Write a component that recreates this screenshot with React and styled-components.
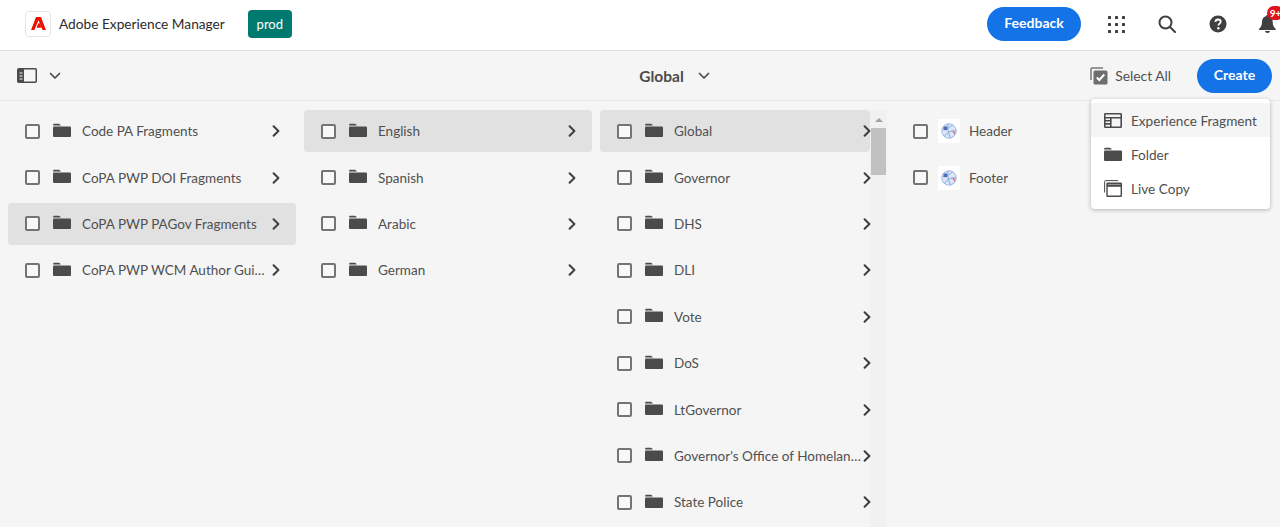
import React from 'react';
import styled, { createGlobalStyle } from 'styled-components';

const GlobalStyle = createGlobalStyle`
  html, body { margin: 0; padding: 0; height: 100%; overflow: hidden; }
  #root { height: 100%; }
  body { font-family: Lato, "Open Sans", sans-serif; background: #f5f5f5; color: #4b4b4b; }
`;

const FolderIcon = () => (
  <svg width="18" height="15" viewBox="0 0 18 15">
    <path d="M0 2.2C0 1.3.6.7 1.5.7h4.2c.5 0 .9.2 1.2.6l1 1.2h-8z" fill="#4b4b4b" />
    <rect x="0" y="3.4" width="18" height="10.6" rx="1" fill="#4b4b4b" />
  </svg>
);

const Chevron = () => (
  <svg width="8" height="12" viewBox="0 0 8 12">
    <path d="M1.6 1.2 6.4 6l-4.8 4.8" fill="none" stroke="#3f3f3f" strokeWidth="2" strokeLinecap="round" strokeLinejoin="round" />
  </svg>
);

const Globe = () => (
  <svg width="18" height="18" viewBox="0 0 20 20">
    <circle cx="10" cy="10" r="8" fill="#dbe6f6" stroke="#8fb0e0" />
    <path d="M3 8c4 1 9-3 11-5M5 16c2-4 8-7 13-6M9 2c-1 5 0 11 3 16" fill="none" stroke="#7fa3dc" />
    <rect x="4" y="5" width="4" height="4" fill="#4a6fb5" />
    <path d="m13 9 4 3-1 2z" fill="#d9606a" />
  </svg>
);

const Row = ({ label, selected, thumb, last }) => (
  <RowBox $selected={selected}>
    <Check />
    {thumb ? <Thumb><Globe /></Thumb> : <FolderSlot><FolderIcon /></FolderSlot>}
    <RowLabel $thumb={thumb}>{label}</RowLabel>
    {!thumb && <ChevronSlot $last={last}><Chevron /></ChevronSlot>}
  </RowBox>
);

const col1 = ['Code PA Fragments', 'CoPA PWP DOI Fragments', 'CoPA PWP PAGov Fragments', 'CoPA PWP WCM Author Guide Fragments'];
const col2 = ['English', 'Spanish', 'Arabic', 'German'];
const col3 = ['Global', 'Governor', 'DHS', 'DLI', 'Vote', 'DoS', 'LtGovernor', "Governor's Office of Homeland Security", 'State Police'];

export default function App() {
  return (
    <Page>
      <GlobalStyle />
      <Header>
        <Brand>
          <LogoBox>
            <svg width="15" height="13" viewBox="0 0 16 14">
              <path d="M5.3 0h5.400L16 14h-3.600L8 3.600 3.600 14H0z" fill="#eb1000" />
              <path d="M7.900 6.800h1.500l2 4.700H5.900z" fill="#eb1000" />
            </svg>
          </LogoBox>
          <BrandName>Adobe Experience Manager</BrandName>
          <EnvBadge>prod</EnvBadge>
        </Brand>
        <HeaderActions>
          <PillButton>Feedback</PillButton>
          <IconSlot>
            <svg width="18" height="18" viewBox="0 0 18 18" fill="#3f3f3f">
              {[1, 8, 15].flatMap((y) => [1, 8, 15].map((x) => <rect key={`${x}-${y}`} x={x} y={y} width="3" height="3" rx=".5" />))}
            </svg>
          </IconSlot>
          <IconSlot>
            <svg width="18" height="18" viewBox="0 0 18 18" fill="none" stroke="#3f3f3f" strokeWidth="2" strokeLinecap="round">
              <circle cx="7.500" cy="7.500" r="6" />
              <path d="m12 12 5 5" />
            </svg>
          </IconSlot>
          <IconSlot>
            <svg width="18" height="18" viewBox="0 0 18 18">
              <circle cx="9" cy="9" r="8.500" fill="#3f3f3f" />
              <path d="M6.400 7c0-1.600 1.200-2.500 2.700-2.500S11.700 5.400 11.700 6.800c0 1.700-2.300 1.900-2.300 3.600" fill="none" stroke="#fff" strokeWidth="1.800" />
              <circle cx="9.400" cy="13.200" r="1.200" fill="#fff" />
            </svg>
          </IconSlot>
          <BellSlot>
            <svg width="17" height="18" viewBox="0 0 17 18" fill="#3f3f3f">
              <path d="M8.500 0c.8 0 1.300.6 1.300 1.300C12.400 2 13.700 4 13.700 7c0 3.500 1 5 3 7v1H0v-1c2-2 3-3.500 3-7 0-3 1.300-5 3.900-5.700C7 .6 7.700 0 8.500 0z" />
              <path d="M6 16h5c-.2 1.200-1.200 2-2.500 2S6.200 17.200 6 16z" />
            </svg>
            <BellBadge>9+</BellBadge>
          </BellSlot>
        </HeaderActions>
      </Header>

      <Toolbar>
        <RailToggle>
          <svg width="20" height="15" viewBox="0 0 20 15">
            <rect x=".75" y=".75" width="18.500" height="13.500" rx="1" fill="none" stroke="#4b4b4b" strokeWidth="1.500" />
            <rect x="1" y="1" width="6" height="13" fill="#4b4b4b" />
            <path d="M2.500 5h3M2.500 8h3M2.500 11h3" stroke="#f5f5f5" />
          </svg>
          <svg width="12" height="8" viewBox="0 0 12 8">
            <path d="m1.500 1.500 4.500 4.500 4.500-4.500" fill="none" stroke="#4b4b4b" strokeWidth="1.700" strokeLinecap="round" strokeLinejoin="round" />
          </svg>
        </RailToggle>
        <PathTitle>
          Global
          <svg width="12" height="8" viewBox="0 0 12 8">
            <path d="m1.500 1.500 4.500 4.500 4.500-4.500" fill="none" stroke="#4b4b4b" strokeWidth="1.700" strokeLinecap="round" strokeLinejoin="round" />
          </svg>
        </PathTitle>
        <ToolbarRight>
          <SelectAll>
            <svg width="18" height="18" viewBox="0 0 18 18">
              <path d="M1 13V2a1 1 0 0 1 1-1h11" fill="none" stroke="#777" strokeWidth="1.500" />
              <rect x="3.500" y="3.500" width="14" height="14" rx="1.500" fill="#6e6e6e" />
              <path d="m6.800 10.500 2.500 2.500 5-5.500" fill="none" stroke="#fff" strokeWidth="2" />
            </svg>
            Select All
          </SelectAll>
          <CreateButton>Create</CreateButton>
        </ToolbarRight>
      </Toolbar>

      <Columns>
        <Column>
          {col1.map((c, i) => <Row key={c} label={c} selected={i === 2} />)}
        </Column>
        <Column>
          {col2.map((c, i) => <Row key={c} label={c} selected={i === 0} />)}
        </Column>
        <ScrollColumn>
          <Column>
            {col3.map((c, i) => <Row key={c} label={c} selected={i === 0} last />)}
          </Column>
          <ScrollTrack>
            <ScrollArrow />
            <ScrollThumb />
          </ScrollTrack>
        </ScrollColumn>
        <Column>
          <Row label="Header" thumb />
          <Row label="Footer" thumb />
        </Column>
      </Columns>

      <Popover>
        <MenuItem $active>
          <svg width="18" height="15" viewBox="0 0 18 15" fill="none" stroke="#4b4b4b" strokeWidth="1.600">
            <rect x=".8" y=".8" width="16.400" height="13.400" rx=".5" />
            <path d="M.8 4.700h16.400M.8 7.800h6M.8 10.900h6M6.800 4.700v9.500" />
          </svg>
          <MenuLabel>Experience Fragment</MenuLabel>
        </MenuItem>
        <MenuItem>
          <FolderIcon />
          <MenuLabel>Folder</MenuLabel>
        </MenuItem>
        <MenuItem>
          <svg width="18" height="17" viewBox="0 0 18 17" fill="none" stroke="#4b4b4b">
            <path d="M.6 12.500V1.600a1 1 0 0 1 1-1h12.500" strokeWidth="1" />
            <rect x="3" y="3.300" width="14.300" height="13" rx=".5" strokeWidth="1.400" />
            <path d="M3 5.600h14.300" strokeWidth="2.400" />
          </svg>
          <MenuLabel>Live Copy</MenuLabel>
        </MenuItem>
      </Popover>
    </Page>
  );
}

const Page = styled.div`
  position: relative;
  height: 100vh;
  overflow: hidden;
  display: flex;
  flex-direction: column;
`;

const Header = styled.header`
  flex: 0 0 51px;
  box-sizing: border-box;
  background: #fff;
  border-bottom: 1px solid #dcdcdc;
  display: flex;
  align-items: center;
  justify-content: space-between;
  padding: 0 4px 3px 25px;
`;

const Brand = styled.div`
  display: flex;
  align-items: center;
`;

const LogoBox = styled.div`
  width: 26px;
  height: 26px;
  box-sizing: border-box;
  border: 1px solid #e6e6e6;
  border-radius: 4px;
  display: flex;
  align-items: center;
  justify-content: center;
  background: #fff;
`;

const BrandName = styled.span`
  margin-left: 8px;
  font-size: 13.7px;
  color: #2c2c2c;
`;

const EnvBadge = styled.span`
  margin-left: 23px;
  width: 44px;
  height: 28px;
  border-radius: 4px;
  background: #007a6e;
  color: #fff;
  font-size: 13px;
  display: flex;
  align-items: center;
  justify-content: center;
`;

const HeaderActions = styled.div`
  display: flex;
  align-items: center;
`;

const PillButton = styled.button`
  width: 94px;
  height: 34px;
  padding: 0 0 2px;
  border: none;
  border-radius: 17px;
  background: #1473e6;
  color: #fff;
  font: 700 14px Lato, sans-serif;
  margin-right: 25px;
`;

const IconSlot = styled.div`
  width: 20px;
  height: 20px;
  margin-right: 31px;
  display: flex;
  align-items: center;
  justify-content: center;
`;

const BellSlot = styled.div`
  position: relative;
  width: 17px;
  height: 18px;
  display: flex;
`;

const BellBadge = styled.span`
  position: absolute;
  top: -9px;
  left: 8px;
  min-width: 15px;
  height: 14px;
  padding: 0 1px;
  border-radius: 7px;
  background: #e0121b;
  color: #fff;
  font-size: 10px;
  font-weight: 700;
  line-height: 14px;
  text-align: center;
`;

const Toolbar = styled.div`
  flex: 0 0 50px;
  box-sizing: border-box;
  border-bottom: 1px solid #e8e8e8;
  display: grid;
  grid-template-columns: 1fr auto 1fr;
  align-items: center;
  padding: 0 8px 0 17px;
`;

const RailToggle = styled.div`
  display: flex;
  align-items: center;
  gap: 12px;
`;

const PathTitle = styled.div`
  display: flex;
  align-items: center;
  gap: 14px;
  margin-left: 60px;
  font-size: 15.5px;
  font-weight: 700;
  color: #4b4b4b;
`;

const ToolbarRight = styled.div`
  display: flex;
  align-items: center;
  justify-content: flex-end;
  gap: 26px;
`;

const SelectAll = styled.div`
  display: flex;
  align-items: center;
  gap: 7px;
  font-size: 13.8px;
  color: #505050;
`;

const CreateButton = styled(PillButton)`
  width: 75px;
  margin-right: 0;
`;

const Columns = styled.main`
  flex: 1;
  display: flex;
  min-height: 0;
  overflow: hidden;
`;

const Column = styled.div`
  width: 296px;
  box-sizing: border-box;
  padding: 9px 0 0 8px;
  display: flex;
  flex-direction: column;
  gap: 4px;
`;

const ScrollColumn = styled.div`
  display: flex;
  width: 296px;
  flex: 0 0 296px;
  & > ${Column} {
    width: 278px;
    flex: 0 0 278px;
  }
`;

const ScrollTrack = styled.div`
  flex: 0 0 17px;
  background: #f1f1f1;
  margin-top: 9px;
  padding: 8px 1px 0;
  box-sizing: border-box;
`;

const ScrollArrow = styled.div`
  width: 0;
  height: 0;
  margin: 0 auto 6px;
  border-left: 4px solid transparent;
  border-right: 4px solid transparent;
  border-bottom: 4px solid #a3a3a3;
`;

const ScrollThumb = styled.div`
  height: 47px;
  background: #c1c1c1;
`;

const RowBox = styled.div`
  flex: 0 0 42.4px;
  box-sizing: border-box;
  display: flex;
  align-items: center;
  padding: 0 0 0 17px;
  border-radius: 4px;
  background: ${(p) => (p.$selected ? '#e1e1e1' : 'transparent')};
`;

const Check = styled.span`
  flex: 0 0 auto;
  width: 15px;
  height: 15px;
  box-sizing: border-box;
  border: 2px solid #747474;
  border-radius: 2px;
  background: #f8f8f8;
`;

const FolderSlot = styled.span`
  margin: -2px 0 0 13px;
  display: flex;
`;

const Thumb = styled.span`
  margin-left: 10px;
  width: 22px;
  height: 24px;
  background: #fff;
  display: flex;
  align-items: center;
  justify-content: center;
`;

const RowLabel = styled.span`
  margin-left: ${(p) => (p.$thumb ? '9px' : '11px')};
  font-size: 13.5px;
  color: #505050;
  white-space: nowrap;
  overflow: hidden;
  text-overflow: ellipsis;
  flex: ${(p) => (p.$thumb ? '0 1 auto' : '1')};
  min-width: 0;
`;

const ChevronSlot = styled.span`
  flex: 0 0 auto;
  display: flex;
  position: relative;
  z-index: 1;
  margin-right: ${(p) => (p.$last ? '-1px' : '16px')};
`;

const Popover = styled.div`
  position: absolute;
  top: 99px;
  left: 1091px;
  width: 179px;
  box-sizing: border-box;
  padding: 4px 0;
  background: #fff;
  border-radius: 4px;
  box-shadow: 0 1px 4px rgba(0, 0, 0, 0.28);
`;

const MenuItem = styled.div`
  height: 34px;
  display: flex;
  align-items: center;
  gap: 9px;
  padding-left: 13px;
  background: ${(p) => (p.$active ? '#f5f5f5' : 'transparent')};
`;

const MenuLabel = styled.span`
  padding-top: 1px;
  font-size: 13.6px;
  color: #505050;
`;
